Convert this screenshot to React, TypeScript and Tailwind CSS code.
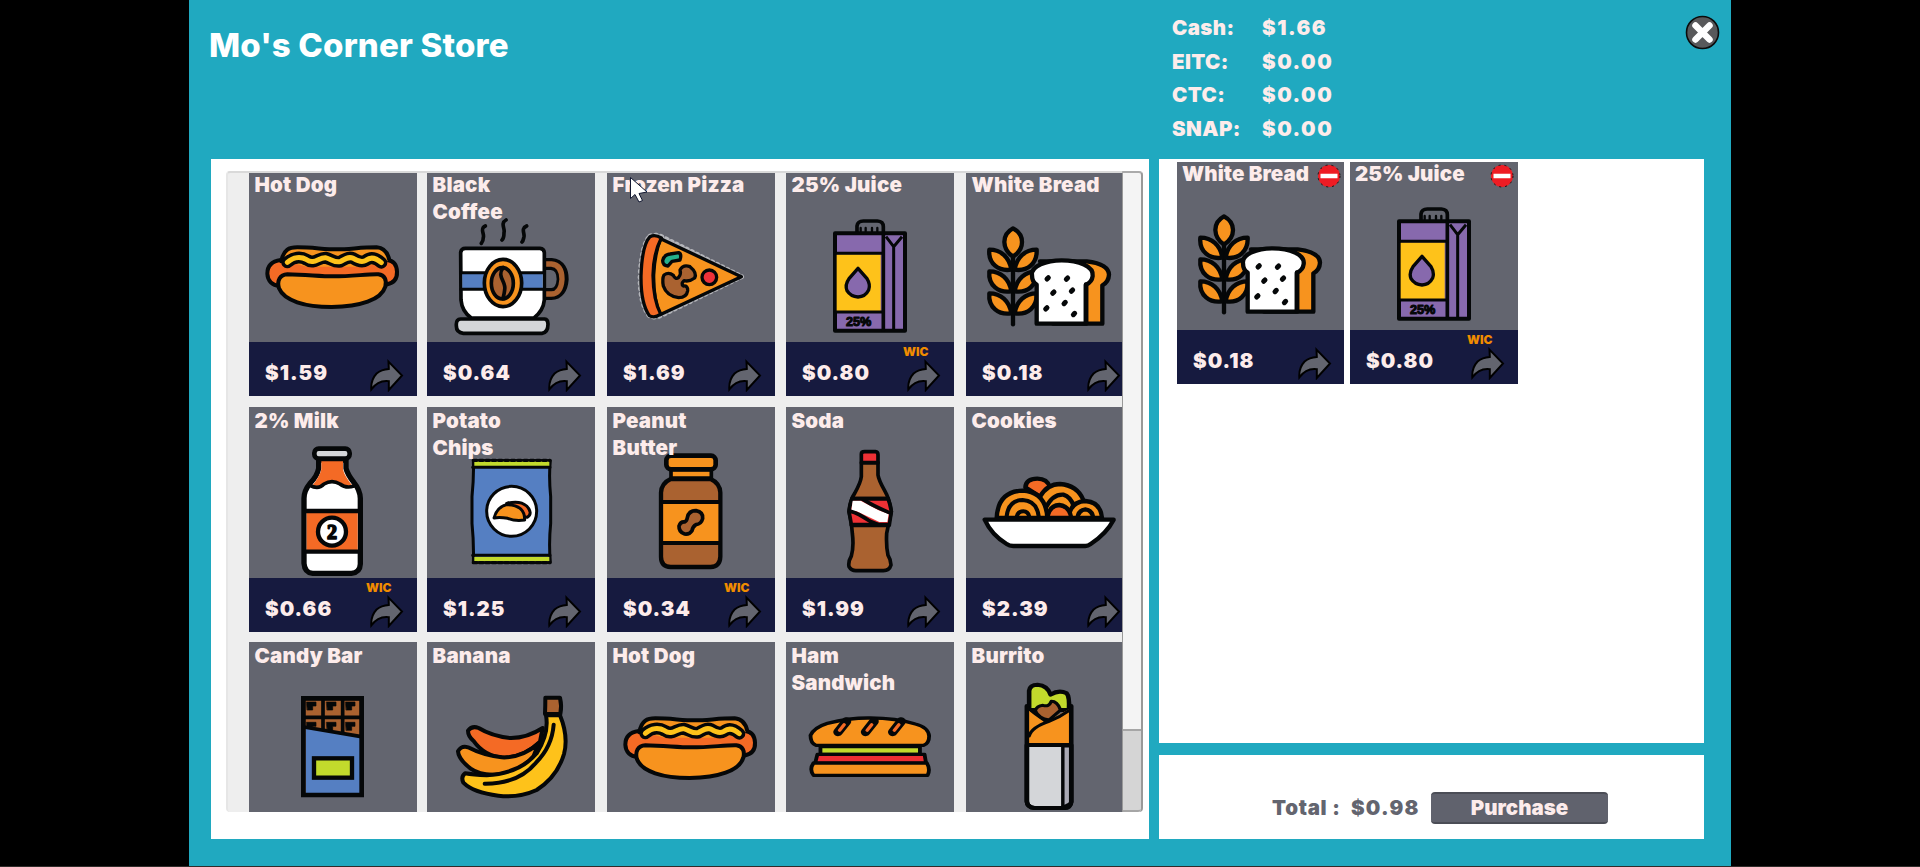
import type { ReactNode } from "react";

const K = "#050708";
const OR = "#f7931e";
const RED = "#f46a25";
const BR = "#aa6230";
const YE = "#fec21a";
const BL = "#557fc2";
const LI = "#c2da2c";

function Art({ box, sw = 12, children }: { box: string; sw?: number; children: ReactNode }) {
  return (
    <svg
      viewBox={box}
      preserveAspectRatio="none"
      className="h-[171px] w-[168px]"
      fill="none"
      stroke={K}
      strokeWidth={sw}
      strokeLinejoin="round"
      strokeLinecap="round"
    >
      {children}
    </svg>
  );
}

function HotDog() {
  const wave =
    "M232 307C250 291 272 289 290 299C312 315 326 292 346 293C364 297 374 309 390 305C406 298 414 288 430 295C446 305 456 308 468 301C482 290 498 294 514 308";
  return (
    <Art box="117 33 504 513" sw={12}>
      <path fill={RED} d="M212 300C182 304 172 322 172 341C173 364 188 376 208 378L528 374C552 370 562 355 561 335C560 312 550 302 532 300Z" />
      <path fill={OR} stroke="none" d="M214 300C220 268 238 262 262 262L380 268L500 262C526 264 534 282 538 302L460 320L290 320Z" />
      <path d="M214 304C220 268 238 262 262 262C310 262 340 268 380 268C420 268 450 262 500 262C526 264 534 282 538 300" />
      <path d={wave} strokeWidth={36} />
      <path d={wave} stroke={YE} strokeWidth={15} />
      <path fill={OR} d="M232 343C290 344 330 349 370 349C430 349 470 342 505 343C524 345 531 360 526 380C514 420 450 440 365 441C285 441 222 422 207 385C200 362 210 344 232 343Z" />
    </Art>
  );
}

function Coffee() {
  return (
    <Art box="651 33 504 513" sw={11}>
      <path d="M826 198C808 206 824 222 820 232C820 240 818 246 814 250M888 180C870 190 886 206 882 218C882 230 880 236 876 240M950 198C932 206 944 218 942 230C940 238 940 242 936 246" />
      <path d="M1006 312H1024C1050 314 1058 335 1058 358C1056 386 1044 402 1024 402H1002" strokeWidth={36} />
      <path d="M1006 312H1024C1050 314 1056 335 1056 358C1054 386 1044 402 1024 402H1002" stroke={BR} strokeWidth={16} strokeLinecap="butt" />
      <path fill="#fff" d="M752 277Q754 265 766 265H990Q1002 266 1003 278V420Q1000 452 972 474H784Q756 455 753 420Z" />
      <path fill={BL} stroke="none" d="M757 338H998V388H757Z" />
      <path d="M753 338H1002M753 388H1002" strokeWidth={9} />
      <ellipse cx="879" cy="369" rx="56" ry="71" fill={OR} />
      <ellipse cx="877" cy="370" rx="33" ry="47" fill={BR} />
      <path d="M880 322C858 350 890 365 884 390C882 405 880 412 878 416" />
      <path fill="#d4d6d9" d="M752 477H1004Q1014 478 1014 492Q1014 518 996 520H760Q738 518 739 495Q738 478 752 477Z" />
    </Art>
  );
}

function Pizza() {
  return (
    <Art box="51 33 504 513" sw={10}>
      <path stroke="#b4b5ba" strokeWidth="14" strokeDasharray="3 14" d="M180 228Q195 220 220 232L456 350L215 466Q192 476 178 468Q148 430 150 345Q156 250 180 228Z" />
      <path fill={OR} d="M212 236L454 350L210 464Q190 420 191 345Q194 280 212 236Z" />
      <path fill={RED} d="M180 230Q195 222 214 234Q190 280 189 346Q190 420 212 462Q194 476 178 467Q152 430 153 348Q156 255 180 230Z" />
      <path fill="#25b08c" d="M218 302Q222 284 240 282L266 278Q276 282 270 300L246 304L234 318Q218 316 218 302Z" />
      <path fill={BR} d="M222 345Q236 335 250 346Q256 360 266 352Q274 342 270 330Q280 312 300 320Q322 338 314 354Q298 366 282 362Q272 372 280 378Q294 376 293 392Q290 412 266 413Q230 408 220 378Q216 356 222 345Z" />
      <circle cx="358" cy="352" r="22" fill="#ef3239" />
    </Art>
  );
}

function Juice() {
  return (
    <Art box="588 33 504 513" sw={11}>
      <path d="M801 215V198Q803 183 820 183H862Q880 184 880 200V215" />
      <path d="M812 204V214M827 204V214M846 204V214M862 204V214" strokeWidth={7} />
      <path fill="#8769ad" strokeWidth={12} d="M735 220H945V512H735Z" />
      <path fill={YE} stroke="none" d="M740 283H872V455H740Z" />
      <path d="M738 280H876M738 456H876" strokeWidth={9} />
      <path d="M880 222V510" strokeWidth={11} />
      <path d="M911 262V510M888 230L911 260L936 230" strokeWidth={9} strokeLinecap="butt" />
      <path fill="#8769ad" strokeWidth={10} d="M804 325L831 356Q842 374 836 390Q826 410 804 411Q782 410 771 392Q764 374 777 356Z" />
      <text x="806" y="498" textAnchor="middle" fill={K} strokeWidth={3} fontSize="36" fontWeight="800" textLength="76" lengthAdjust="spacingAndGlyphs" className="font-['Liberation_Sans',sans-serif]">
        25%
      </text>
    </Art>
  );
}

function Bread() {
  const leaf = (y: number) => (
    <g key={y}>
      <path fill={OR} d={`M148 ${y}C182 ${y} 208 ${y + 22} 214 ${y + 60}C176 ${y + 66} 144 ${y + 42} 148 ${y}Z`} />
      <path fill={OR} d={`M290 ${y}C256 ${y} 230 ${y + 22} 224 ${y + 60}C262 ${y + 66} 292 ${y + 42} 290 ${y}Z`} />
    </g>
  );
  const seeds = [[323, 355], [381, 356], [340, 398], [396, 392], [319, 445], [374, 429], [402, 462]];
  return (
    <Art box="78 33 504 513" sw={13}>
      <path d="M219 282V493" />
      <path fill={OR} d="M219 205C200 215 193 228 193 246C194 268 204 280 219 290C234 280 246 266 246 246C246 226 236 214 219 205Z" />
      {[269, 334, 400].map(leaf)}
      <path fill={OR} d="M300 304H440Q506 312 507 344Q506 366 487 376V491H340V304Z" />
      <path fill="#fff" d="M276 346C272 318 320 301 365 301C415 301 462 318 458 348Q456 366 438 374V491H290V374Q276 366 276 346Z" />
      <path d="M438 374V488" strokeWidth={14} />
      {seeds.map(([x, y]) => (
        <path key={x} strokeWidth={15} d={`M${x - 2} ${y + 2}l4 -4`} />
      ))}
    </Art>
  );
}

function Milk() {
  return (
    <Art box="117 21 504 513" sw={16}>
      <path fill="#fff" d="M326 180V205Q322 228 300 250Q282 272 282 295V490Q284 518 308 520H424Q450 518 451 492V295Q450 270 432 248Q412 222 408 205V180Z" />
      <path fill={RED} stroke="none" d="M334 184H399V208Q402 226 426 256Q404 262 388 248Q366 232 342 250Q328 262 308 256Q330 228 334 208Z" />
      <path d="M300 256Q325 270 342 252Q366 238 390 252Q408 266 432 258" strokeWidth={11} />
      <path fill={RED} stroke="none" d="M290 338H443V450H290Z" />
      <path d="M284 333H450M284 455H450" strokeWidth={13} strokeLinecap="butt" />
      <circle cx="366" cy="395" r="42" fill="#fff" strokeWidth={13} />
      <text x="366" y="418" textAnchor="middle" fill={K} strokeWidth={5} fontSize="60" fontWeight="700" className="font-['Liberation_Serif',serif]">
        2
      </text>
      <rect x="313" y="146" width="106" height="30" rx="13" fill="#d4d6d9" strokeWidth={14} />
    </Art>
  );
}

function Chips() {
  return (
    <Art box="651 21 504 513" sw={9}>
      <path fill={BL} d="M790 182H1021Q1016 230 1022 290V370Q1016 430 1021 486H790Q792 430 786 370V290Q792 230 790 182Z" />
      <path fill={LI} stroke="none" d="M793 184H1018V198H793ZM793 470H1018V484H793Z" />
      <path d="M788 202H1020M788 466H1020" />
      <path d="M790 181H1020M790 488H1020" strokeDasharray="10 9" strokeWidth={10} />
      <path d="M790 181H1020M790 487H1020" strokeWidth={5} />
      <circle cx="905" cy="334" r="75" fill="#fff" />
      <path fill={RED} d="M890 310Q930 300 950 318Q970 340 952 352L930 350Z" />
      <path fill={OR} d="M852 354Q860 322 890 314Q945 315 944 360Q915 364 893 355Q868 350 852 354Z" />
    </Art>
  );
}

function PeanutButter() {
  return (
    <Art box="51 21 504 513" sw={13}>
      <path fill={BR} d="M242 237H362Q390 250 391 278V470Q390 500 362 501H242Q213 500 213 470V278Q214 250 242 237Z" />
      <path fill={OR} stroke="none" d="M220 312H385V424H220Z" />
      <path d="M214 306H390M214 429H390" strokeWidth={12} strokeLinecap="butt" />
      <path fill={OR} d="M243 208H364V234H243Z" strokeWidth={11} />
      <rect x="229" y="167" width="148" height="41" rx="14" fill={OR} strokeWidth={14} />
      <path fill={BR} strokeWidth={11} d="M292 353Q296 332 318 332Q340 336 338 356Q334 372 318 374Q308 380 306 392Q298 404 284 402Q266 396 267 378Q272 364 284 366Q291 362 292 353Z" />
    </Art>
  );
}

function Soda() {
  return (
    <Art box="588 21 504 513" sw={11}>
      <path fill={BR} d="M814 188V230Q812 248 794 280Q780 300 777 335Q786 370 787 400Q792 440 784 468Q774 485 777 500Q784 513 800 512H880Q898 512 903 495Q902 478 894 466Q888 440 890 400Q896 370 904 335Q900 300 884 272Q866 240 864 225V188Z" />
      <path fill="#ee3135" d="M814 162Q814 155 824 155H856Q864 156 864 164V188H814Z" />
      <path fill="#ee3135" d="M786 296H894Q900 310 904 335L898 374H784Q780 350 777 335Q780 310 786 296Z" />
      <path fill="#fff" stroke="none" d="M788 302H812L864 330L896 342L892 366H868L800 334L784 332Z" />
      <path d="M820 299Q850 318 896 337M782 334Q802 338 840 364L866 374" />
      <path d="M786 296H894M784 376H898" />
    </Art>
  );
}

function Cookies() {
  return (
    <Art box="78 21 504 513" sw={13}>
      <path fill={RED} d="M256 262Q258 236 292 236Q322 236 330 262L300 290Z" />
      <path fill={OR} d="M300 350V290Q322 252 360 252Q412 256 430 300V352Z" />
      <path d="M318 322Q338 282 370 284Q392 290 402 320V350" />
      <path fill={OR} d="M386 354Q390 305 436 303Q482 306 486 354Z" />
      <path d="M412 354Q416 330 436 328Q456 330 460 354" />
      <path fill={OR} d="M170 354Q174 274 248 272Q318 276 322 354Z" />
      <path d="M199 354Q204 300 248 300Q292 302 297 354M230 350Q234 334 250 334Q264 334 268 350" strokeWidth={12} />
      <path fill={RED} d="M322 354Q328 316 358 315Q388 318 394 354Z" />
      <path fill="#fff" d="M134 359H521Q500 400 452 432Q444 438 436 438H220Q208 438 200 432Q155 405 134 359Z" />
    </Art>
  );
}

function CandyBar() {
  return (
    <Art box="177 36 504 513" sw={12}>
      <path fill={BR} strokeLinejoin="miter" d="M340 205H515V495H340Z" />
      <path d="M399 206V310M458 206V318M342 262H514" strokeWidth={11} />
      {[350, 410, 467].map((x) => (
        <path key={x} fill={K} strokeWidth={2} d={`M${x} 216h28v12h-10v12h-16ZM${x} 277h28v12h-10v12h-16Z`} />
      ))}
      <path fill={BL} stroke="none" d="M347 294L510 320V490H347Z" />
      <path d="M342 291L514 320" strokeWidth={11} />
      <path strokeLinejoin="miter" d="M340 205H515V495H340Z" strokeWidth={14} />
      <rect x="372" y="385" width="114" height="58" fill={LI} strokeLinejoin="miter" strokeWidth={13} />
    </Art>
  );
}

function Banana() {
  return (
    <Art box="711 36 504 513" sw={12}>
      <path fill={RED} d="M1058 294Q1010 325 960 324Q905 318 866 294Q846 286 834 302Q834 318 850 332Q885 382 945 383Q1005 380 1050 335Z" />
      <path fill={OR} d="M1046 340Q995 385 935 382Q880 376 834 352Q814 346 804 364Q806 388 842 416Q870 436 915 434Q985 430 1030 380Z" />
      <path fill={YE} d="M1068 256H1110Q1136 320 1122 372Q1102 440 1040 480Q985 505 925 497Q850 488 820 458Q812 440 825 430Q850 434 890 436Q990 430 1040 370Q1078 310 1068 256Z" />
      <path d="M1091 284Q1086 350 1038 398Q985 462 884 461" />
      <path fill={BR} d="M1066 203H1110Q1116 228 1111 252H1065Q1066 228 1066 203Z" />
    </Art>
  );
}

function Sandwich() {
  return (
    <Art box="512 36 439 513" sw={10}>
      <path fill={LI} d="M602 350H862V373H602Z" />
      <path fill="#ec2f33" d="M594 373H874L878 400H588Z" />
      <path fill={OR} d="M584 399H880Q890 418 882 436H584Q572 418 584 399Z" />
      <path fill={OR} d="M590 346Q576 340 576 316Q586 292 620 280Q680 263 732 264Q800 264 850 282Q884 292 886 318Q886 340 872 346Z" />
      {[656, 728, 799].map((x) => (
        <g key={x}>
          <path d={`M${x + 14} 274L${x - 8} 306`} strokeWidth={25} />
          <path d={`M${x + 8} 284L${x - 4} 301`} stroke={RED} strokeWidth={9} />
        </g>
      ))}
    </Art>
  );
}

function Burrito() {
  return (
    <Art box="983 36 439 513" sw={12}>
      <path fill={LI} d="M1148 240V182Q1150 164 1170 164Q1196 166 1204 194Q1226 178 1246 190Q1254 200 1252 240Z" />
      <path fill={OR} stroke="none" d="M1142 238L1196 272L1258 234V345H1142Z" />
      <path fill={BR} strokeWidth={9} d="M1164 242Q1168 228 1184 226Q1200 232 1206 214Q1222 214 1230 240L1200 270Q1172 264 1164 242Z" />
      <path d="M1144 232Q1162 252 1190 272M1252 242Q1228 262 1200 274Q1154 292 1148 318" strokeWidth={9} />
      <path fill="#d4d6d9" d="M1142 345H1258V515Q1256 533 1240 534H1162Q1143 532 1142 514Z" />
      <path fill="#a9a9b4" strokeWidth={9} d="M1236 348H1257V520L1236 532Z" />
      <path d="M1142 228V514Q1143 532 1162 534H1240Q1256 533 1258 515V228" />
    </Art>
  );
}

type Item = { name: string; art: () => ReactNode; price?: string; wic?: boolean };

const WHITE_BREAD: Item = { name: "White Bread", art: Bread, price: "$0.18" };
const JUICE: Item = { name: "25% Juice", art: Juice, price: "$0.80", wic: true };

const ITEMS: Item[] = [
  { name: "Hot Dog", art: HotDog, price: "$1.59" },
  { name: "Black\nCoffee", art: Coffee, price: "$0.64" },
  { name: "Frozen Pizza", art: Pizza, price: "$1.69" },
  JUICE,
  WHITE_BREAD,
  { name: "2% Milk", art: Milk, price: "$0.66", wic: true },
  { name: "Potato\nChips", art: Chips, price: "$1.25" },
  { name: "Peanut\nButter", art: PeanutButter, price: "$0.34", wic: true },
  { name: "Soda", art: Soda, price: "$1.99" },
  { name: "Cookies", art: Cookies, price: "$2.39" },
  { name: "Candy Bar", art: CandyBar },
  { name: "Banana", art: Banana },
  { name: "Hot Dog", art: HotDog },
  { name: "Ham\nSandwich", art: Sandwich },
  { name: "Burrito", art: Burrito },
];

const BALANCES = [
  ["Cash:", "$1.66"],
  ["EITC:", "$0.00"],
  ["CTC:", "$0.00"],
  ["SNAP:", "$0.00"],
];

function ShareArrow() {
  return (
    <svg viewBox="478 599 104 100" className="h-[33px] w-[35px]" fill="#63656f" stroke="#000" strokeWidth="6">
      <path d="M536 607L577 649L537 693V666Q505 662 484 691Q482 662 500 643Q514 630 537 629Z" />
    </svg>
  );
}

function PriceBar({ item }: { item: Item }) {
  return (
    <div className="flex h-[54px] w-[168px] shrink-0 bg-[#161a3f] pl-[16px]">
      <span className="w-[101px] pt-[21px] text-[20.5px] font-black leading-5 tracking-[1px]">{item.price}</span>
      <div className="flex flex-col">
        <span className="h-[17px] pt-[3px] text-[12px] font-black leading-[13px] text-[#f08c00]">
          {item.wic ? "WIC" : ""}
        </span>
        <div className="pl-[3px]">
          <ShareArrow />
        </div>
      </div>
    </div>
  );
}

function Card({ item }: { item: Item }) {
  const Picture = item.art;
  return (
    <article className="flex h-[225px] w-[168px] flex-col bg-[#63656f]">
      <div className="relative h-[171px]">
        <Picture />
        <h3 className="absolute left-[5.5px] top-0 whitespace-pre text-[20.5px] font-black leading-[27px] tracking-[0.2px]">
          {item.name}
        </h3>
      </div>
      <PriceBar item={item} />
    </article>
  );
}

function CartCard({ item }: { item: Item }) {
  const Picture = item.art;
  return (
    <article className="flex h-[222px] flex-col overflow-hidden bg-[#63656f]">
      <div className="relative h-[168px]">
        <div className="-mt-[3px]">
          <Picture />
        </div>
        <h3 className="absolute left-[5px] top-px whitespace-pre text-[20.5px] font-black leading-[22px] tracking-[0.1px]">
          {item.name}
        </h3>
        <button className="absolute left-[140px] top-[2px] size-6" aria-label="Remove">
          <svg viewBox="0 0 24 24">
            <circle cx="12" cy="12" r="11" fill="#ee1c24" stroke="#111" strokeWidth="1" strokeDasharray="2 4" />
            <path d="M3.5 12h17" stroke="#fff" strokeWidth="4.5" />
          </svg>
        </button>
      </div>
      <PriceBar item={item} />
    </article>
  );
}

export default function App() {
  return (
    <div className="flex h-[867px] w-[1920px] justify-center overflow-hidden border-b border-[#302c2a] bg-black font-['Inter',sans-serif] text-[#fdeceb]">
      <main className="relative flex h-[866px] w-[1542px] flex-col bg-[#20a9c0]">
        <header className="flex h-[159px] shrink-0">
          <h1 className="w-[984px] pl-5 pt-[25px] text-[33px] font-extrabold leading-10 tracking-[0.2px] text-white">
            Mo's Corner Store
          </h1>
          <dl className="grid auto-rows-[33.6px] grid-cols-[90px_90px] content-start pt-[11px] text-[20.5px] font-black leading-[33.6px]">
            {BALANCES.map(([label, value]) => (
              <div key={label} className="contents">
                <dt className="-ml-px tracking-[0.4px]">{label}</dt>
                <dd className="-ml-px tracking-[1.5px]">{value}</dd>
              </div>
            ))}
          </dl>
          <button className="ml-auto mr-[11px] mt-[15px] size-[35px]" aria-label="Close">
            <svg viewBox="0 0 35 35">
              <circle cx="17.5" cy="17.5" r="16" fill="#58595b" stroke="#0b0b0b" strokeWidth="1.6" />
              <path d="M10.5 10.5l14 14M24.5 10.5l-14 14" stroke="#fff" strokeWidth="6.5" strokeLinecap="round" />
            </svg>
          </button>
        </header>
        <div className="flex h-[680px] gap-[10px] pl-[22px]">
          <section className="w-[938px] bg-white pl-[15px] pt-3">
            <div className="flex h-[641px] w-[917px]">
              <div className="w-[896px] overflow-hidden rounded-l border-l-2 border-t-2 border-l-[#e6e6e6] border-t-[#d9d9d9] bg-[#eeeeee]">
                <div className="-mt-[2px] ml-[21px] grid grid-cols-[178px_180px_179px_180px_168px] grid-rows-[236px_235px_225px]">
                  {ITEMS.map((item, i) => (
                    <Card key={i} item={item} />
                  ))}
                </div>
              </div>
              <div className="flex w-[21px] flex-col justify-end rounded-r-[4px] border-l border-r-2 border-t-2 border-[#999] border-t-[#aaa] bg-[#f4f4f4]">
                <div className="h-[83px] rounded-br-[3px] border-y-2 border-[#a6a6a6] bg-[#d5d5d5]" />
              </div>
            </div>
          </section>
          <div className="flex w-[545px] flex-col gap-3">
            <section className="flex h-[584px] bg-white pl-[18px] pt-[3px]">
              <div className="mr-[6px] w-[167px]">
                <CartCard item={WHITE_BREAD} />
              </div>
              <div className="w-[168px]">
                <CartCard item={JUICE} />
              </div>
            </section>
            <section className="flex h-[84px] items-center bg-white pl-[113px] pt-[22px] text-[20.5px] font-black text-[#63656f]">
              <span className="w-[79px] pt-px tracking-[0.7px]">Total :</span>
              <span className="w-[80px] pt-px tracking-[1.2px]">$0.98</span>
              <button className="h-8 w-[177px] rounded-[4px] border-y-2 border-[#4b4d56] bg-[#60626d] pt-px leading-none text-[#fdeceb]">
                Purchase
              </button>
            </section>
          </div>
        </div>
        <svg viewBox="0 0 18 27" className="absolute left-[440px] top-[176px] h-[27px] w-[19px]" fill="#fff" stroke="#111730" strokeWidth="1">
          <path d="M1 1.5L1 22.5L5.5 18.5L9.5 26L13 24.5L9.5 17.5L17.5 16Z" />
        </svg>
      </main>
    </div>
  );
}
